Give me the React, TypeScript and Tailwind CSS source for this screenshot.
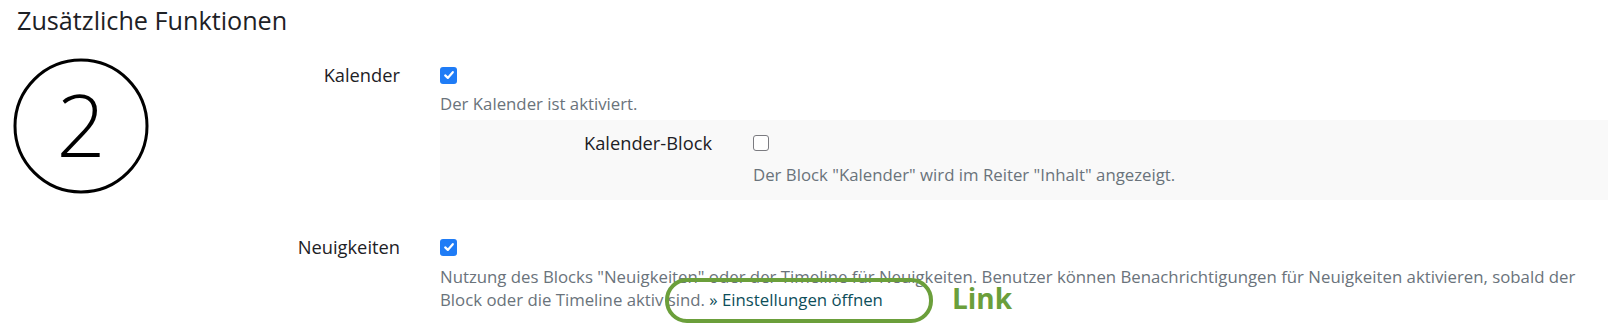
import React from "react";

function CheckedBox() {
  return (
    <span className="inline-flex h-[17px] w-[17px] items-center justify-center rounded-[3px] bg-[#1f7cf6]">
      <svg width="12" height="12" viewBox="0 0 12 12" fill="none">
        <path d="M2.2 6.4 L4.8 8.9 L9.8 3.2" stroke="white" strokeWidth="2.2" strokeLinecap="round" strokeLinejoin="round" />
      </svg>
    </span>
  );
}

function EmptyBox() {
  return <span className="inline-block h-[16px] w-[16px] rounded-[3px] border-[1.5px] border-[#7b7b80] bg-white" />;
}

export default function App() {
  return (
    <div className="relative h-[328px] w-[1608px] overflow-hidden bg-white font-['Open_Sans',sans-serif] text-[#1d2125]">
      <h3 className="pl-[17px] pt-[5px] text-[25.2px] leading-[30px] font-normal text-[#1d2125]">Zusätzliche Funktionen</h3>

      {/* Kalender */}
      <div className="mt-[28px] flex">
        <div className="w-[400px] text-right text-[18.3px] leading-[24px]">Kalender</div>
        <div className="ml-[40px] flex flex-1 flex-col">
          <div className="flex h-[24px] items-center">
            <CheckedBox />
          </div>
          <div className="mt-[5px] text-[16.8px] leading-[23px] text-[#6a737b]">Der Kalender ist aktiviert.</div>
          <div className="mt-[5px] flex bg-[#f9f9f9] pt-[11px] pb-[14px]">
            <div className="w-[272px] text-right text-[18.3px] leading-[24px]">Kalender-Block</div>
            <div className="ml-[41px] flex flex-col">
              <div className="flex h-[24px] items-center">
                <EmptyBox />
              </div>
              <div className="mt-[8px] text-[16.8px] leading-[23px] text-[#6a737b]">
                Der Block "Kalender" wird im Reiter "Inhalt" angezeigt.
              </div>
            </div>
          </div>
        </div>
      </div>

      {/* Neuigkeiten */}
      <div className="mt-[35px] flex">
        <div className="w-[400px] text-right text-[18.3px] leading-[24px]">Neuigkeiten</div>
        <div className="ml-[40px] flex w-[1150px] flex-col">
          <div className="flex h-[24px] items-center">
            <CheckedBox />
          </div>
          <div className="mt-[6px] text-[16.8px] leading-[23px] text-[#6a737b]">
            Nutzung des Blocks "Neuigkeiten" oder der Timeline für Neuigkeiten. Benutzer können Benachrichtigungen für Neuigkeiten aktivieren, sobald der Block oder die Timeline aktiv sind.{" "}
            <a className="text-[#0d4e5a]">» Einstellungen öffnen</a>
          </div>
        </div>
      </div>

      {/* Annotations */}
      <div className="absolute left-[13px] top-[58px] h-[136px] w-[136px]">
        <svg width="136" height="136" viewBox="0 0 136 136">
          <circle cx="68" cy="68" r="66" fill="none" stroke="#000" strokeWidth="3" />
          <text x="68" y="99" textAnchor="middle" fontSize="86" fontWeight="300" fontFamily="'Open Sans', sans-serif" fill="#000">2</text>
        </svg>
      </div>
      <div className="absolute left-[665px] top-[278px] h-[45px] w-[268px] rounded-[22px] border-4 border-[#6b9f3b]" />
      <div className="absolute left-[952px] top-[281px] text-[28px] leading-[34px] font-bold text-[#6b9f3b]">Link</div>
    </div>
  );
}
